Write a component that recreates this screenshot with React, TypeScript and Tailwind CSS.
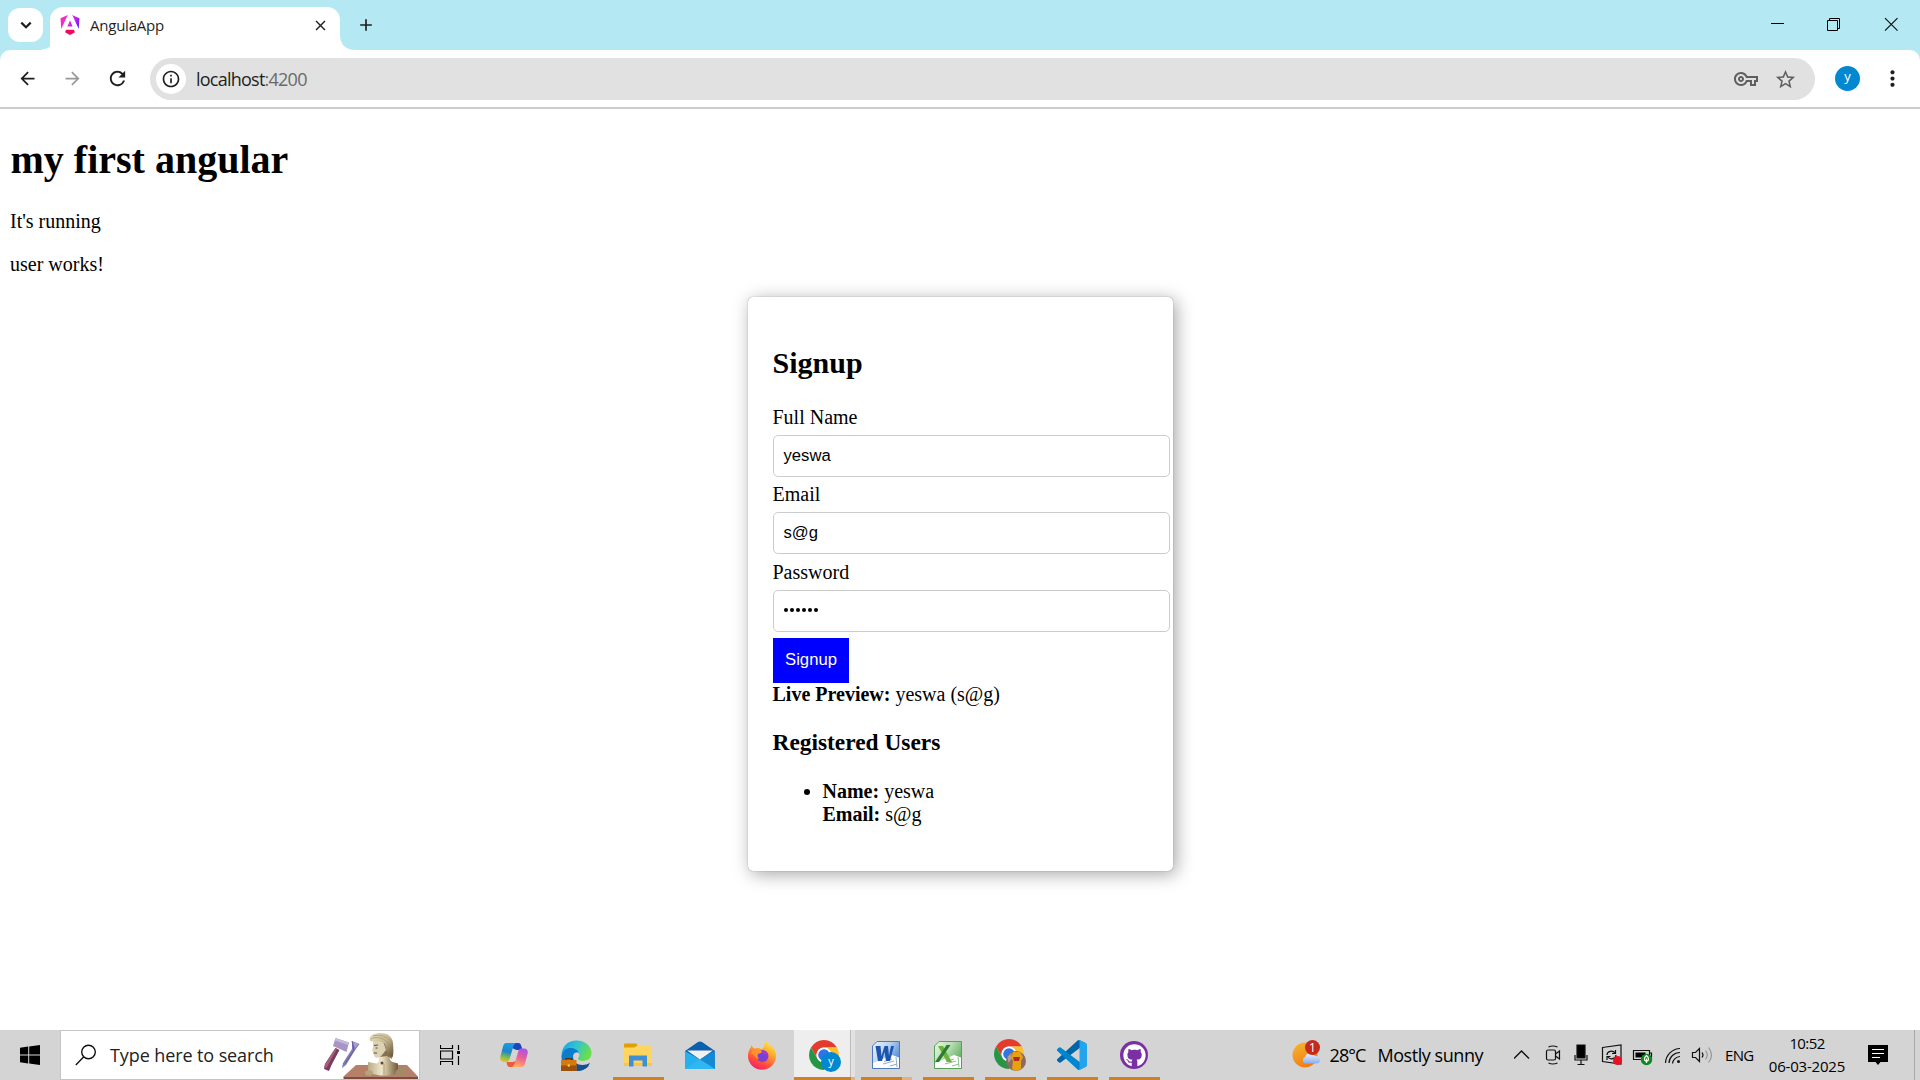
import type { ReactNode } from "react";
import {
  MdAdd,
  MdArrowBack,
  MdArrowForward,
  MdClose,
  MdInfoOutline,
  MdMoreVert,
  MdOutlineVpnKey,
  MdRefresh,
  MdStarBorder,
} from "react-icons/md";
import { FaGithub } from "react-icons/fa";

/* ---------- Browser chrome ---------- */

function AngularLogo() {
  return (
    <svg className="h-5 w-5 shrink-0" viewBox="0 0 24 24">
      <defs>
        <linearGradient id="ng" x1="0" y1="0" x2="1" y2="0.5">
          <stop offset="0" stopColor="#ff2bb5" />
          <stop offset="0.6" stopColor="#e52be0" />
          <stop offset="1" stopColor="#7a1bff" />
        </linearGradient>
      </defs>
      <path
        fill="url(#ng)"
        d="M14.692 0l7.832 16.855.814-12.856L14.692 0ZM9.308 0 .662 3.999l.814 12.856L9.308 0Zm-.405 13.93h6.198L12 6.396 8.903 13.93Z"
      />
      <path fill="#f2095f" d="M16.712 17.711H7.288l-1.204 2.916L12 24l5.916-3.373-1.204-2.916Z" />
    </svg>
  );
}

function TabStrip() {
  return (
    <div className="flex h-[50px] w-full bg-[#b4e8f3]">
      <div className="ml-2 mt-2 flex h-[34px] w-[35px] items-center justify-center rounded-[12px] bg-white">
        <svg className="h-3 w-3" viewBox="0 0 12 12" fill="none" stroke="#1f1f1f" strokeWidth="2.2">
          <path d="M1.3 3.6 6 8.2l4.7-4.6" />
        </svg>
      </div>
      <svg className="mt-[34px] h-4 w-4 -ml-px" viewBox="0 0 16 16">
        <path d="M16 0v16H-8Q16 16 16 0z" fill="#fff" />
      </svg>
      <div className="-ml-[8px] mt-[7px] flex h-[43px] w-[290px] items-center rounded-t-[13px] bg-white pl-[10px] pr-[11px]">
        <div className="mb-[7px] flex w-full items-center">
          <AngularLogo />
          <span className="ml-[10px] font-['Open_Sans','Noto_Sans',sans-serif] text-[15px] leading-5 tracking-[-0.23px] text-[#1f1f1f]">
            AngulaApp
          </span>
          <MdClose className="ml-auto h-[17px] w-[17px] text-[#1f1f1f]" />
        </div>
      </div>
      <svg className="mt-[34px] h-4 w-4" viewBox="0 0 16 16">
        <path d="M0 0v16h16Q0 16 0 0z" fill="#fff" />
      </svg>
      <MdAdd className="mt-[15px] h-[20px] w-[20px] text-[#1f1f1f]" />
      <svg className="ml-auto mr-[21px] mt-[17px] h-4 w-[128px]" viewBox="0 0 128 16" fill="none" stroke="#000">
        <path d="M0 6.500h13" />
        <path d="M56.500 3.500h10v10h-10zM58.500 3.500v-2h10v10h-2" />
        <path d="M114 1.200l12.500 12.500M126.500 1.200 114 13.700" stroke="#111" strokeWidth="1.200" />
      </svg>
    </div>
  );
}

function Toolbar() {
  return (
    <div className="w-full bg-[#b4e8f3]">
      <div className="flex h-[59px] w-full items-center rounded-t-[10px] border-b-2 border-[#cbcbcb] bg-white">
        <MdArrowBack className="ml-[17px] h-[21px] w-[21px] text-[#1f1f1f]" />
        <MdArrowForward className="ml-[24px] h-[21px] w-[21px] text-[#9a9a9a]" />
        <MdRefresh className="ml-[23px] h-[23px] w-[23px] text-[#1f1f1f]" />
        <div className="ml-[21px] flex h-[42px] w-[1665px] items-center rounded-full bg-[#e1e1e1] pl-[6px] pr-[18px]">
          <div className="flex h-[30px] w-[30px] items-center justify-center rounded-full bg-white">
            <MdInfoOutline className="h-[20px] w-[20px] text-[#1f1f1f]" />
          </div>
          <span className="ml-[10px] pt-[2px] font-['Open_Sans','Noto_Sans',sans-serif] text-[18px] tracking-[-0.76px] text-[#1f1f1f]">
            localhost<span className="text-[#6a6a6a]">:4200</span>
          </span>
          <MdOutlineVpnKey className="ml-auto mt-px h-[24px] w-[24px] text-[#5f5f5f]" />
          <MdStarBorder className="ml-[16px] mt-px h-[23px] w-[23px] text-[#5f5f5f]" />
        </div>
        <div className="ml-[20px] flex h-[25px] w-[25px] items-center justify-center rounded-full bg-[#0288d1] pb-[4px] font-['Open_Sans',sans-serif] text-[13px] leading-none text-white">
          y
        </div>
        <MdMoreVert className="ml-[20px] h-[25px] w-[25px] text-[#1f1f1f]" />
      </div>
    </div>
  );
}

/* ---------- Page ---------- */

function Field({ label, children }: { label: string; children: ReactNode }) {
  return (
    <div>
      <div className="h-[23px]">{label}</div>
      <div className="mt-[6px] flex h-[42px] w-[397px] items-center rounded-[5px] border border-[#ccc] pb-[2px] pl-[10px] font-['Liberation_Sans',sans-serif] text-[16.67px]">
        {children}
      </div>
    </div>
  );
}

function SignupCard() {
  return (
    <div className="ml-[747.5px] mt-[21px] h-[574px] w-[425.5px] rounded-[5px] bg-white p-[25px] pt-[49px] shadow-[0_0_1px_rgba(0,0,0,0.5),3px_3px_18px_rgba(0,0,0,0.36)]">
      <h2 className="h-[60px] text-[30px] font-bold leading-[34px]">Signup</h2>
      <Field label="Full Name">yeswa</Field>
      <div className="mt-[6px]">
        <Field label="Email">s@g</Field>
      </div>
      <div className="mt-[7px]">
        <Field label="Password">
          <span className="flex gap-[2px] pl-[0.500px]">
            {[0, 1, 2, 3, 4, 5].map((i) => (
              <span key={i} className="h-1 w-1 rounded-full bg-black" />
            ))}
          </span>
        </Field>
      </div>
      <div className="mt-[6px] flex h-[45px] w-[76px] items-center justify-center bg-[blue] pb-[2px] pl-px font-['Liberation_Sans',sans-serif] text-[16.67px] text-white">
        Signup
      </div>
      <p>
        <b>Live Preview:</b> yeswa (s@g)
      </p>
      <h3 className="mt-[23px] text-[23.4px] font-bold leading-[26px]">Registered Users</h3>
      <ul className="mt-[25px] list-disc pl-[50px]">
        <li>
          <b>Name:</b> yeswa
          <br />
          <b>Email:</b> s@g
        </li>
      </ul>
    </div>
  );
}

function Page() {
  return (
    <main className="h-[921px] w-full bg-white font-['Liberation_Serif',serif] text-[20px] leading-[23px] text-black">
      <div className="pl-[10px] pt-[28px]">
        <h1 className="pl-[0.500px] text-[40px] font-bold leading-[46px]">my first angular</h1>
        <p className="mt-[27px]">It&apos;s running</p>
        <p className="mt-5">user works!</p>
      </div>
      <SignupCard />
    </main>
  );
}

/* ---------- Taskbar icons ---------- */

function ChromeIcon({ children }: { children?: ReactNode }) {
  return (
    <svg className="h-8 w-8" viewBox="0 0 32 32">
      <g transform="scale(0.625)">
        <path fill="#e33b2e" d="M24 12H44.780A24 24 0 0 0 3.220 12L13.600 30A12 12 0 0 1 24 12z" />
        <path fill="#249645" d="M34.390 30A12 12 0 0 1 13.610 30L3.220 12A24 24 0 0 0 24 48z" />
        <path fill="#fcc02c" d="M24 48 34.390 30A12 12 0 0 0 24 12H44.780A24 24 0 0 1 24 48z" />
        <circle cx="24" cy="24" r="12" fill="#fff" />
        <circle cx="24" cy="24" r="9.300" fill="#2f74e8" />
      </g>
      {children}
    </svg>
  );
}

function CopilotIcon() {
  return (
    <svg className="h-[26px] w-7" viewBox="0 0 28 26">
      <defs>
        <linearGradient id="cpA" x1="0.500" y1="0" x2="0.300" y2="1">
          <stop offset="0" stopColor="#1a9be8" />
          <stop offset="0.450" stopColor="#1f86c8" />
          <stop offset="0.750" stopColor="#7dbb57" />
          <stop offset="1" stopColor="#f2c318" />
        </linearGradient>
        <linearGradient id="cpB" x1="0.700" y1="0" x2="0.400" y2="1">
          <stop offset="0" stopColor="#a653e8" />
          <stop offset="0.500" stopColor="#ec5f98" />
          <stop offset="1" stopColor="#ffae62" />
        </linearGradient>
      </defs>
      <path d="M12 1h6c2.500 0 3 2 3.800 4.500l.7 2.500h-6L12 6z" fill="#1b44bd" />
      <path d="M16 25h-6c-2.500 0-3-2-3.500-5H13l3-1z" fill="#ee5b3a" />
      <path d="M6 1h10c-2 1-2.600 3-3.300 5.500L9.600 17C9 19 8 20 6 20H4c-3 0-4.500-2.500-3.500-6L3 4.500C3.600 2.300 4.500 1 6 1z" fill="url(#cpA)" />
      <path d="M22 25H12c2-1 2.600-3 3.300-5.500L18.400 9c.6-2 1.600-2.500 3.600-2.500h2c3 0 4.500 2.500 3.500 5.500L25 21.500c-.6 2.200-1.500 3.500-3 3.500z" fill="url(#cpB)" />
    </svg>
  );
}

function EdgeIcon() {
  return (
    <svg className="h-[31px] w-[31px]" viewBox="0 0 31 31">
      <defs>
        <linearGradient id="edA" x1="0" y1="0" x2="1" y2="0.400">
          <stop offset="0" stopColor="#1b9de2" />
          <stop offset="0.500" stopColor="#2fc3d5" />
          <stop offset="1" stopColor="#6ade4d" />
        </linearGradient>
      </defs>
      <path d="M.5 15C1 5.500 7.500.5 15.500.5c9 0 15 6 15 12.500 0 5-3.500 8-8.500 8-4 0-5.500-1.500-5-3 1-1 1.500-2 1.200-3.500C17.500 10 13 8 9 8.500 5 9 2 11.500.5 15z" fill="url(#edA)" />
      <path d="M.5 16C1.500 10.500 5 8 9.500 8c4 0 7.500 2 8.500 5-3-1.500-6 .5-6 4 0 6 5 9.500 11 9.500 2 0 4-.5 5.500-1.500C26 28.500 21 31 16 31 7 31 0 24.500.5 16z" fill="#0f7bcb" />
      <path d="M12 17c0 5 4 8 9.500 8 3 0 5-.8 7.500-2.200C27 28 22 31 16.500 31c-3 0-6-3-6.500-7z" fill="#154f91" />
      <path d="M12.500 16c0-3 3-4 5.300-2.300.7 2-.3 3.300-1 4.300-.3 1.800 1.500 3 5.200 3 2 0 4-.5 5.500-1.500L27 22c-7 3-14 0-14.500-6z" fill="#d4d4d4" />
      <path d="M0 20h15.500v11H0z" fill="#d57a0e" />
      <path d="M0 25.500h15.500V31H0z" fill="#99510b" />
      <path d="M5 20v-1.500h5.500V20" stroke="#51351a" strokeWidth="1.200" fill="none" />
      <circle cx="7.800" cy="25.500" r="1.200" fill="#ffd04b" />
    </svg>
  );
}

function ExplorerIcon() {
  return (
    <svg className="h-6 w-7" viewBox="0 0 28 24">
      <path d="M0 1.200Q0 .5 1 .5h11l1.500 1.500v3H0z" fill="#dfa000" />
      <path d="M0 4.500h10.500l2.500-2h15V23H0z" fill="#ffd45f" />
      <path d="M0 20h28v3H0z" fill="#f7c64b" />
      <path d="M5 12.500h18V23.500h-4.500v-6h-9v6H5z" fill="#3e8fd8" />
    </svg>
  );
}

function MailIcon() {
  return (
    <svg className="h-7 w-[30px]" viewBox="0 0 30 28">
      <path d="M0 10 13 1q2-1 4 0l13 9v8H0z" fill="#0b5fac" />
      <path d="M2 9.500h26L15 18.500z" fill="#f1f1f1" />
      <path d="M0 10l15 8.500L30 10v18H0z" fill="#27b0ee" />
      <path d="M15 18.500 30 10v18z" fill="#1489d4" />
      <path d="M0 28l15-9.500L30 28z" fill="#35b9f2" opacity=".7" />
    </svg>
  );
}

function FirefoxIcon() {
  return (
    <svg className="h-[30px] w-7" viewBox="0 0 28 30">
      <defs>
        <linearGradient id="ff" x1="0.800" y1="0" x2="0.300" y2="1">
          <stop offset="0" stopColor="#fff13f" />
          <stop offset="0.400" stopColor="#ffa22e" />
          <stop offset="0.750" stopColor="#ff4b3c" />
          <stop offset="1" stopColor="#ef1d74" />
        </linearGradient>
      </defs>
      <path d="M18 .5c.8 2.500 3 4 4.500 6 .2-.8 0-1.500 0-2 3.500 3 5.500 7 5.500 11.500A14 13.700 0 0 1 0 16c0-3.500 1-6.500 3-8.800V5l3 3.500c2.500-1 6-.8 7.500.8L16 7C16 4 17 2 18 .5z" fill="url(#ff)" />
      <circle cx="14.500" cy="16" r="6" fill="#7b3fd4" />
      <path d="M3 13c2-3 6-4 8-3l3 1c0 2-2 2-4 3-1 2 0 4 1 5-4-.5-4-4-8-6z" fill="#ff942c" />
      <path d="M14 11c4 0 6 2 6 5-2-2-3-2-5-2z" fill="#b833be" />
    </svg>
  );
}

function OfficeIcon({ kind }: { kind: "word" | "excel" }) {
  const word = kind === "word";
  return (
    <svg className="h-7 w-7" viewBox="0 0 28 28">
      <defs>
        <linearGradient id={kind} x1="0" y1="0" x2="1" y2="0.600">
          <stop offset="0" stopColor={word ? "#eef5ff" : "#e9f8e5"} />
          <stop offset="0.500" stopColor={word ? "#b9d2f3" : "#b8deb2"} />
          <stop offset="1" stopColor={word ? "#5289d2" : "#5fb060"} />
        </linearGradient>
      </defs>
      <path d="M5 .5h22.500v27H.5V5z" fill={`url(#${kind})`} stroke={word ? "#4f78b8" : "#58a05a"} />
      <path d="M1 22 20 14l7 2.500V27H1z" fill="#fff" />
      <path d="M12 20.500l8-2.500M11 23l11-3M18 25l7-2M24 16l1 10" stroke={word ? "#8fa9d0" : "#8cbc8b"} />
      {word ? (
        <path d="M3.500 5h5l1 10L12.500 5h3.500l1 10L19 5h3l-4 15h-4l-1.500-9L10 20H6z" fill="#1c55ae" />
      ) : (
        <>
          <path d="M4 5h5l9 16h-5z" fill="#6db33a" />
          <path d="M12.500 4h4L5 21H1z" fill="#2b7d33" />
        </>
      )}
    </svg>
  );
}

function VsCodeIcon() {
  return (
    <svg className="h-[30px] w-[30px]" viewBox="0 0 100 100">
      <path fill="#0065A9" d="M96.461 10.796L75.857.876A6.230 6.230 0 0 0 68.750 2.083L1.299 63.583a4.167 4.167 0 0 0 .004 6.162l5.510 5.009a4.167 4.167 0 0 0 5.321.237L93.361 13.370C96.086 11.303 100 13.246 100 16.667v-.24c0-2.400-1.375-4.590-3.539-5.631z" />
      <path fill="#0085d0" d="M96.461 89.204l-20.604 9.920a6.230 6.230 0 0 1-7.107-1.207L1.299 36.417a4.167 4.167 0 0 1 .004-6.162l5.510-5.009a4.167 4.167 0 0 1 5.321-.237L93.361 86.630C96.086 88.697 100 86.754 100 83.333v.24c0 2.400-1.375 4.589-3.539 5.631z" />
      <path fill="#25a4ee" d="M75.858 99.126a6.230 6.230 0 0 1-7.108-1.209C71.056 100.223 75 98.590 75 95.328V4.672c0-3.262-3.944-4.895-6.250-2.589A6.230 6.230 0 0 1 75.858.874l20.600 9.907A6.250 6.250 0 0 1 100 16.413v67.174a6.250 6.250 0 0 1-3.541 5.633z" />
    </svg>
  );
}

function SearchArt() {
  return (
    <svg className="ml-auto h-12 w-[96px] shrink-0" viewBox="0 0 96 48">
      <defs>
        <linearGradient id="bust" x1="0" y1="0" x2="1" y2="0">
          <stop offset="0" stopColor="#b8ab88" />
          <stop offset="0.450" stopColor="#eee5c9" />
          <stop offset="0.620" stopColor="#c9ba94" />
          <stop offset="1" stopColor="#6e5a3c" />
        </linearGradient>
        <linearGradient id="hair" x1="0" y1="0" x2="1" y2="1">
          <stop offset="0" stopColor="#e8dfc3" />
          <stop offset="0.500" stopColor="#c5b892" />
          <stop offset="1" stopColor="#5f4b2f" />
        </linearGradient>
      </defs>
      {/* mallet and chisel */}
      <path d="M12.500 17l4 2L8.500 34 6 40l-5-2 1-5z" fill="#7c3b58" />
      <path d="M12.500 17l1.500.7L4 36l-3 2 1-5z" fill="#a0607a" />
      <path d="M12.500 7l13.500 4.500-2.500 9.500-13.500-6z" fill="#a596c6" />
      <path d="M12.500 7l13.500 4.500-.8 2.500-13.500-4.500z" fill="#c5b8dc" />
      <path d="M29 10l7.500 3-5 7-8.500 14-4 3 1-5 9-14z" fill="#8279ba" />
      <path d="M29 10l2 9.500-9 13" stroke="#5d548f" fill="none" strokeWidth=".8" />
      <path d="M30 11l5.500 2-3.500 4z" fill="#aaa2d2" />
      {/* plinth */}
      <path d="M33 34h51l11 11.500H20.500z" fill="#b67f68" />
      <path d="M20.500 45.500H95V48H20.500z" fill="#864a36" />
      {/* torso and neck */}
      <path d="M45 31l9 1.500c2-1 2.500-3 2-7.500l10-3c0 5 1 8 3.500 9l5.500 1.500V42l-9 2.500H57L45 42z" fill="url(#bust)" />
      <path d="M61 33v11" stroke="#a08d68" strokeWidth=".7" />
      {/* head */}
      <path d="M50 9h12l2 9-4 6-4.500 2.500C52.500 27 51 26 51 24l-.7-3-1.300-1.500 1-3z" fill="#ddd3b4" />
      <path d="M60 10l3 9-4 5-2 2 7-1 5 3c-1-4 1-8 0-12l-3-6z" fill="#87724f" />
      <path d="M46.500 9C46 4 51 2 57.500 2 65 2 69.500 6 70 12c.3 5 1 10-.5 14.500L66 24l-3-5-1-6c-4-3-9-3.500-13-2.500-1.500 0-2.200-.5-2.500-1.500z" fill="url(#hair)" />
      <path d="M47.500 8c5-2.500 13-2 17.500 4M50 5c5-1.500 12-.5 16 4" stroke="#a3936c" strokeWidth=".7" fill="none" />
      <path d="M51 14.500l4-.5M50.500 22h3.500M52.500 17h2" stroke="#4a3b27" strokeWidth=".9" />
      <circle cx="59" cy="32" r="1.500" fill="#5d4a2e" />
      {/* rubble */}
      <ellipse cx="46" cy="42" rx="4" ry="2.700" fill="#b7a27c" />
      <ellipse cx="78" cy="40.500" rx="6" ry="3.500" fill="#a28c68" transform="rotate(-20 78 40.500)" />
    </svg>
  );
}

/* ---------- Taskbar ---------- */

function TaskSlot({ running, children }: { running?: boolean; children: ReactNode }) {
  return (
    <div className="flex h-full w-[62px] flex-col items-center">
      <div className="flex h-[47px] w-full items-center justify-center pt-[3px]">{children}</div>
      {running && <div className="h-[3px] w-[51px] bg-[#cc8128]" />}
    </div>
  );
}

function Tray() {
  return (
    <svg className="ml-[31px] h-6 w-[201px] shrink-0" viewBox="0 0 201 24" fill="none" stroke="#111" strokeWidth="1.200">
      <path d="M0 15.500l7.500-7.500 7.500 7.500" strokeWidth="1.400" />
      {/* meet now */}
      <rect x="32.500" y="7" width="9" height="10" rx="1.500" />
      <path d="M41.500 11l4-3v8l-4-3M34.500 4q4-2 9 0M34.500 20q4 2 9 0" />
      {/* microphone */}
      <path d="M63 2h8v13h-8z" fill="#000" />
      <path d="M61 12v5h12v-5M67 17v4M63.500 21.500h7" />
      {/* sync */}
      <path d="M88.500 4.500l18.500-2.500v19l-18.500-2.500z" />
      <path d="M93 12c0-4 6-5 8-2M101.500 7v3.500h-3.500M102 12c0 4-6 5-8 2M93 17v-3.500h3.500" />
      <circle cx="103.500" cy="17.500" r="4.500" fill="#e81123" stroke="none" />
      {/* battery */}
      <path d="M119.500 7.500h16v9h-16zM135.500 10h2v4h-2" />
      <path d="M121.500 9.500h10v5h-10z" fill="#000" stroke="none" />
      <circle cx="132.500" cy="16.500" r="5.700" fill="#0c8a1c" stroke="none" />
      <path d="M132.500 20v-4.500M130.500 16q0-2 2-3.500 2 1.500 2 3.500t-2 2-2-2" stroke="#fff" />
      {/* wifi */}
      <path d="M151.500 20A15 15 0 0 1 166 5.500M155 20A11 11 0 0 1 166 9.500M158.500 20.500A8 8 0 0 1 166 13.500" />
      <circle cx="164.500" cy="18.500" r="1.500" fill="#111" stroke="none" />
      {/* volume */}
      <path d="M178.500 9.500h3l4-4v13l-4-4h-3zM188 9.500q2 2.500 0 5" />
      <path d="M191.500 7.500q3.500 4.500 0 9M194.500 4.500q6 7.500 0 15" stroke="#969696" />
    </svg>
  );
}

function Taskbar() {
  return (
    <footer className="flex h-[50px] w-full items-center bg-[#d4d4d4] font-['Open_Sans','Noto_Sans',sans-serif] text-black">
      <div className="flex w-[60px] shrink-0 items-center justify-center">
        <svg className="h-5 w-5" viewBox="0 0 20 20">
          <path d="M0 2.700 8.200 1.500v8H0zM9.200 1.400 20 0v9.500H9.200zM0 10.400h8.200v8L0 17.300zM9.200 10.400H20V20L9.200 18.600z" />
        </svg>
      </div>
      <div className="flex h-full w-[360px] shrink-0 items-center border border-[#c4c4c4] bg-white pl-[14px]">
        <svg className="h-[22px] w-[22px]" viewBox="0 0 22 22" fill="none" stroke="#111" strokeWidth="1.400">
          <circle cx="13.500" cy="8" r="6.800" />
          <path d="M8.800 12.800.8 21" />
        </svg>
        <span className="ml-[13px] whitespace-nowrap text-[18px] tracking-[-0.1px] text-[#222]">
          Type here to search
        </span>
        <SearchArt />
      </div>
      <svg className="ml-[20px] mr-[22px] h-5 w-[21px] shrink-0" viewBox="0 0 21 20" fill="none" stroke="#000" strokeWidth="1.200">
        <path d="M.5 0v3.500h12V0M.5 20v-3.500h12V20M.5 6h12v8H.5zM18.500 0v5M18.500 11v9" />
        <path d="M17 6h3v3h-3z" fill="#000" stroke="none" />
      </svg>

      <div className="flex h-full shrink-0">
        <TaskSlot><CopilotIcon /></TaskSlot>
        <TaskSlot><EdgeIcon /></TaskSlot>
        <TaskSlot running><ExplorerIcon /></TaskSlot>
        <TaskSlot><MailIcon /></TaskSlot>
        <TaskSlot><FirefoxIcon /></TaskSlot>
        <div className="flex h-full w-[62px] flex-col pl-px">
          <div className="flex h-[47px]">
            <div className="flex w-[57px] items-center border-r border-[#bdbdbd] bg-[#eeeeee] pl-[15px] pt-[5px]">
              <ChromeIcon>
                <circle cx="22" cy="22" r="10" fill="#0288d1" />
                <text x="22" y="25" textAnchor="middle" fontSize="11" fill="#fff" fontFamily="Open Sans">y</text>
              </ChromeIcon>
            </div>
            <div className="w-[4px] bg-[#e2e2e2]" />
          </div>
          <div className="flex h-[3px]">
            <div className="w-[57px] bg-[#cc8128]" />
            <div className="w-1 bg-[#e0b283]" />
          </div>
        </div>
        <div className="flex h-full w-[62px] flex-col items-center">
          <div className="flex h-[47px] items-center pt-[2px] pr-px"><OfficeIcon kind="word" /></div>
          <div className="flex h-[3px] w-[51px]">
            <div className="w-[41px] bg-[#cc8128]" />
            <div className="w-[10px] bg-[#e0b283]" />
          </div>
        </div>
        <TaskSlot running><OfficeIcon kind="excel" /></TaskSlot>
        <TaskSlot running>
          <ChromeIcon>
            <circle cx="22" cy="22" r="10" fill="#8d6a60" />
            <path d="M19 13h7l3 5-2 4v8l-5 2-4-2 1-8-2-3z" fill="#e6a20f" />
            <path d="M19 18h7l-1 4h-5z" fill="#b52a16" />
            <path d="M13.500 18l4-4v6l-3 4z" fill="#b79c95" />
          </ChromeIcon>
        </TaskSlot>
        <TaskSlot running><VsCodeIcon /></TaskSlot>
        <TaskSlot running>
          <div className="flex h-7 w-7 items-center justify-center rounded-full bg-[#7b2fa5]">
            <FaGithub className="h-[23px] w-[23px] text-white" />
          </div>
        </TaskSlot>
      </div>

      <svg className="ml-[127px] h-[30px] w-[30px] shrink-0" viewBox="0 0 30 30">
        <defs>
          <linearGradient id="sun" x1="0.200" y1="0" x2="0.600" y2="1">
            <stop offset="0" stopColor="#f4b62e" />
            <stop offset="1" stopColor="#f27a12" />
          </linearGradient>
          <linearGradient id="cloud" x1="0" y1="0" x2="0" y2="1">
            <stop offset="0" stopColor="#eaf3ff" />
            <stop offset="1" stopColor="#86aef0" />
          </linearGradient>
        </defs>
        <circle cx="13" cy="15" r="12.500" fill="url(#sun)" />
        <path d="M13 23.500a3.500 3.500 0 0 1 0-6.500 5.500 5.500 0 0 1 10-1q5 0 5 4 0 3.500-4 3.500z" fill="url(#cloud)" />
        <circle cx="20.500" cy="7.500" r="7.500" fill="#c42b1c" />
        <text x="20.500" y="12" textAnchor="middle" fontSize="12" fill="#fff" fontFamily="Open Sans">1</text>
      </svg>
      <span className="ml-[7.500px] w-[48px] shrink-0 whitespace-nowrap text-[18px] tracking-[-0.9px]">28°C</span>
      <span className="w-[105.500px] shrink-0 whitespace-nowrap text-[18px] tracking-[-0.45px]">Mostly sunny</span>
      <Tray />
      <span className="ml-[10px] w-[30px] shrink-0 text-[15px] tracking-[-0.7px]">ENG</span>
      <div className="ml-[12px] flex w-[80px] shrink-0 flex-col items-center whitespace-nowrap text-[15px] leading-[23px]">
        <span className="tracking-[-0.6px]">10:52</span>
        <span className="tracking-[-0.2px]">06-03-2025</span>
      </div>
      <svg className="ml-[21px] h-5 w-5 shrink-0" viewBox="0 0 20 20">
        <path d="M0 0h20v17h-7.500L10 20l-2.500-3H0z" />
        <path d="M4 4.500h12M4 8.500h12M4 12.500h8" stroke="#fff" />
      </svg>
      <div className="ml-auto mr-[5px] h-full w-px bg-[#a8a8a8]" />
    </footer>
  );
}

export default function App() {
  return (
    <div className="flex h-[1080px] w-[1920px] flex-col overflow-hidden bg-white">
      <TabStrip />
      <Toolbar />
      <Page />
      <Taskbar />
    </div>
  );
}
